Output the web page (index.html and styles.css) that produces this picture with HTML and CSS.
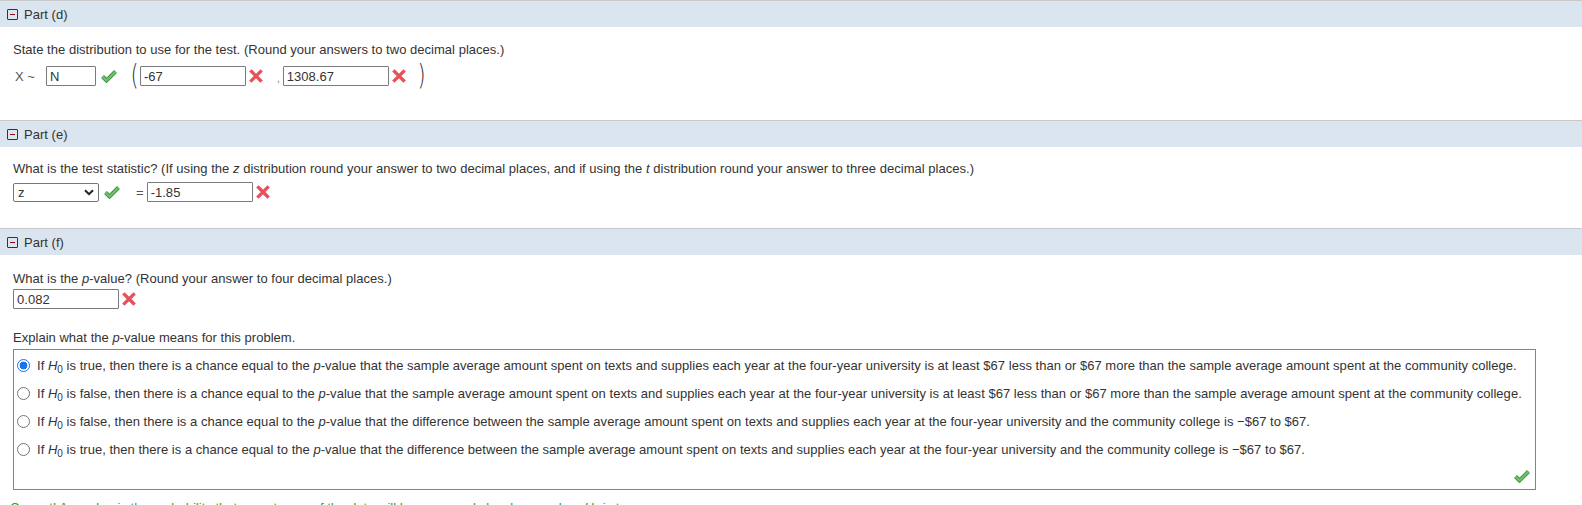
FILE: index.html
```html
<!DOCTYPE html>
<html>
<head>
<meta charset="utf-8">
<link rel="stylesheet" href="styles.css">
</head>
<body>
<div class="part">
  <div class="part-head"><span class="toggle"></span><span class="part-title">Part (d)</span></div>
  <div class="part-body">
    <p class="q q-d">State the distribution to use for the test. (Round your answers to two decimal places.)</p>
    <div class="row row-d">
      <span class="xlabel">X ~</span>
      <span class="inp w50">N</span>
      <svg class="ok" viewBox="0 0 16 13" width="16" height="13"><path d="M1.5 6.5 L5.5 10.5 L14.5 1.5" fill="none" stroke="#3f8f3f" stroke-width="4" stroke-linejoin="miter"/><path d="M1.5 6.5 L5.5 10.5 L14.5 1.5" fill="none" stroke="#6cc46c" stroke-width="2.2"/></svg>
      <span class="paren lp">(</span>
      <span class="inp w106">-67</span>
      <svg class="bad" viewBox="0 0 14 14" width="14" height="14"><path d="M2.5 2.5 L11.5 11.5 M11.5 2.5 L2.5 11.5" stroke="#e8505a" stroke-width="3.3" stroke-linecap="square"/></svg>
      <span class="comma">,</span>
      <span class="inp w106">1308.67</span>
      <svg class="bad" viewBox="0 0 14 14" width="14" height="14"><path d="M2.5 2.5 L11.5 11.5 M11.5 2.5 L2.5 11.5" stroke="#e8505a" stroke-width="3.3" stroke-linecap="square"/></svg>
      <span class="paren rp">)</span>
    </div>
  </div>
</div>

<div class="part">
  <div class="part-head"><span class="toggle"></span><span class="part-title">Part (e)</span></div>
  <div class="part-body">
    <p class="q q-e">What is the test statistic? (If using the <i>z</i> distribution round your answer to two decimal places, and if using the <i>t</i> distribution round your answer to three decimal places.)</p>
    <div class="row row-e">
      <span class="sel">z<svg class="chev" viewBox="0 0 10 7" width="10" height="7"><path d="M1 1.2 L5 5.2 L9 1.2" fill="none" stroke="#222" stroke-width="2"/></svg></span>
      <svg class="ok" viewBox="0 0 16 13" width="16" height="13"><path d="M1.5 6.5 L5.5 10.5 L14.5 1.5" fill="none" stroke="#3f8f3f" stroke-width="4"/><path d="M1.5 6.5 L5.5 10.5 L14.5 1.5" fill="none" stroke="#6cc46c" stroke-width="2.2"/></svg>
      <span class="eq">=</span>
      <span class="inp w106">-1.85</span>
      <svg class="bad" viewBox="0 0 14 14" width="14" height="14"><path d="M2.5 2.5 L11.5 11.5 M11.5 2.5 L2.5 11.5" stroke="#e8505a" stroke-width="3.3" stroke-linecap="square"/></svg>
    </div>
  </div>
</div>

<div class="part">
  <div class="part-head"><span class="toggle"></span><span class="part-title">Part (f)</span></div>
  <div class="part-body">
    <p class="q q-f">What is the <i>p</i>-value? (Round your answer to four decimal places.)</p>
    <div class="row row-f">
      <span class="inp w106">0.082</span>
      <svg class="bad" viewBox="0 0 14 14" width="14" height="14"><path d="M2.5 2.5 L11.5 11.5 M11.5 2.5 L2.5 11.5" stroke="#e8505a" stroke-width="3.3" stroke-linecap="square"/></svg>
    </div>
    <p class="q q-explain">Explain what the <i>p</i>-value means for this problem.</p>
    <div class="choices">
      <div class="opt"><span class="radio on"></span><span>If <i>H</i><sub>0</sub> is true, then there is a chance equal to the <i>p</i>-value that the sample average amount spent on texts and supplies each year at the four-year university is at least $67 less than or $67 more than the sample average amount spent at the community college.</span></div>
      <div class="opt"><span class="radio"></span><span>If <i>H</i><sub>0</sub> is false, then there is a chance equal to the <i>p</i>-value that the sample average amount spent on texts and supplies each year at the four-year university is at least $67 less than or $67 more than the sample average amount spent at the community college.</span></div>
      <div class="opt"><span class="radio"></span><span>If <i>H</i><sub>0</sub> is false, then there is a chance equal to the <i>p</i>-value that the difference between the sample average amount spent on texts and supplies each year at the four-year university and the community college is &minus;$67 to $67.</span></div>
      <div class="opt"><span class="radio"></span><span>If <i>H</i><sub>0</sub> is true, then there is a chance equal to the <i>p</i>-value that the difference between the sample average amount spent on texts and supplies each year at the four-year university and the community college is &minus;$67 to $67.</span></div>
      <div class="box-foot"><svg class="ok" viewBox="0 0 16 13" width="16" height="13"><path d="M1.5 6.5 L5.5 10.5 L14.5 1.5" fill="none" stroke="#3f8f3f" stroke-width="4"/><path d="M1.5 6.5 L5.5 10.5 L14.5 1.5" fill="none" stroke="#6cc46c" stroke-width="2.2"/></svg></div>
    </div>
    <p class="correct">Correct! A <i>p</i>-value is the probability that an outcome of the data will happen purely by chance when <i>H</i><sub>0</sub> is true.</p>
  </div>
</div>
</body>
</html>
```

FILE: styles.css
```css
html, body {
  margin: 0;
  padding: 0;
  background: #fff;
}
body {
  font-family: "Liberation Sans", Arial, sans-serif;
  font-size: 13px;
  letter-spacing: 0.025px;
  color: #333;
  overflow: hidden;
}
.part-head {
  border-top: 1px solid #c8c8c8;
  background: #dae5ef;
  height: 26px;
  display: flex;
  align-items: center;
  padding-left: 7px;
}
.toggle {
  box-sizing: border-box;
  width: 11px;
  height: 11px;
  border: 1px solid #8b0f0f;
  border-radius: 1px;
  position: relative;
  margin-right: 6px;
}
.toggle::after {
  content: "";
  position: absolute;
  left: 2px;
  right: 2px;
  top: 4px;
  height: 1px;
  background: #8b0f0f;
}
.part-title {
  font-size: 13px;
  color: #333;
}
.part-body {
  padding: 0 46px 0 13px;
}
.q {
  margin: 0;
  line-height: 15px;
}
.q-d { padding-top: 15px; }
.q-e { padding-top: 14px; }
.q-f { padding-top: 16px; }
.row {
  display: flex;
  align-items: center;
}
.row-d { height: 30px; margin-top: 4px; margin-bottom: 29px; }
.row-e { margin-top: 6px; margin-bottom: 26px; }
.row-f { margin-top: 3px; }
.xlabel {
  width: 31px;
  padding-left: 2px;
  color: #555;
}
.inp {
  box-sizing: border-box;
  height: 20px;
  border: 1px solid #7a7a7a;
  border-radius: 1px;
  padding: 1px 3px 0;
  line-height: 17px;
  color: #333;
  background: #fff;
}
.w50 { width: 50px; }
.w106 { width: 106px; }
.ok { margin-left: 5px; }
.bad { margin-left: 3px; }
.paren {
  font-family: "DejaVu Sans", sans-serif;
  font-weight: 200;
  font-size: 28px;
  line-height: 30px;
  color: #222;
  transform: scaleX(0.7);
}
.lp { margin-left: 12px; margin-right: 0; }
.rp { margin-left: 10px; }
.comma { margin: 4px 3px 0 14px; font-size: 10px; color: #777; }
.sel {
  box-sizing: border-box;
  width: 86px;
  height: 19px;
  border: 1px solid #767676;
  border-radius: 2px;
  padding: 0 4px 0 4px;
  display: flex;
  align-items: center;
  justify-content: space-between;
  line-height: 17px;
}
.chev { margin-top: 1px; }
.eq { margin-left: 16px; margin-right: 3px; color: #555; }
.q-explain { margin-top: 21px; }
.choices {
  border: 1px solid #5ea635;
  margin-top: 4px;
  height: 138px;
  padding-top: 1px;
  position: relative;
}
.opt {
  display: flex;
  align-items: center;
  height: 28px;
  padding-left: 3px;
}
.opt sub {
  font-size: 10px;
  line-height: 0;
  vertical-align: -3px;
}
.radio {
  box-sizing: border-box;
  width: 13px;
  height: 13px;
  border-radius: 50%;
  border: 1px solid #767676;
  margin: 0 7px 0 0;
  background: #fff;
  flex: none;
}
.radio.on {
  border: 1.5px solid #1a73e8;
  background: radial-gradient(circle, #1a73e8 0 3.6px, #fff 4.2px);
}
.box-foot {
  position: absolute;
  right: 5px;
  bottom: 3px;
}
.correct {
  margin: 10px 0 0 -3px;
  color: #3a9a1a;
  line-height: 15px;
}
.correct sub { font-size: 10px; line-height: 0; }
```
